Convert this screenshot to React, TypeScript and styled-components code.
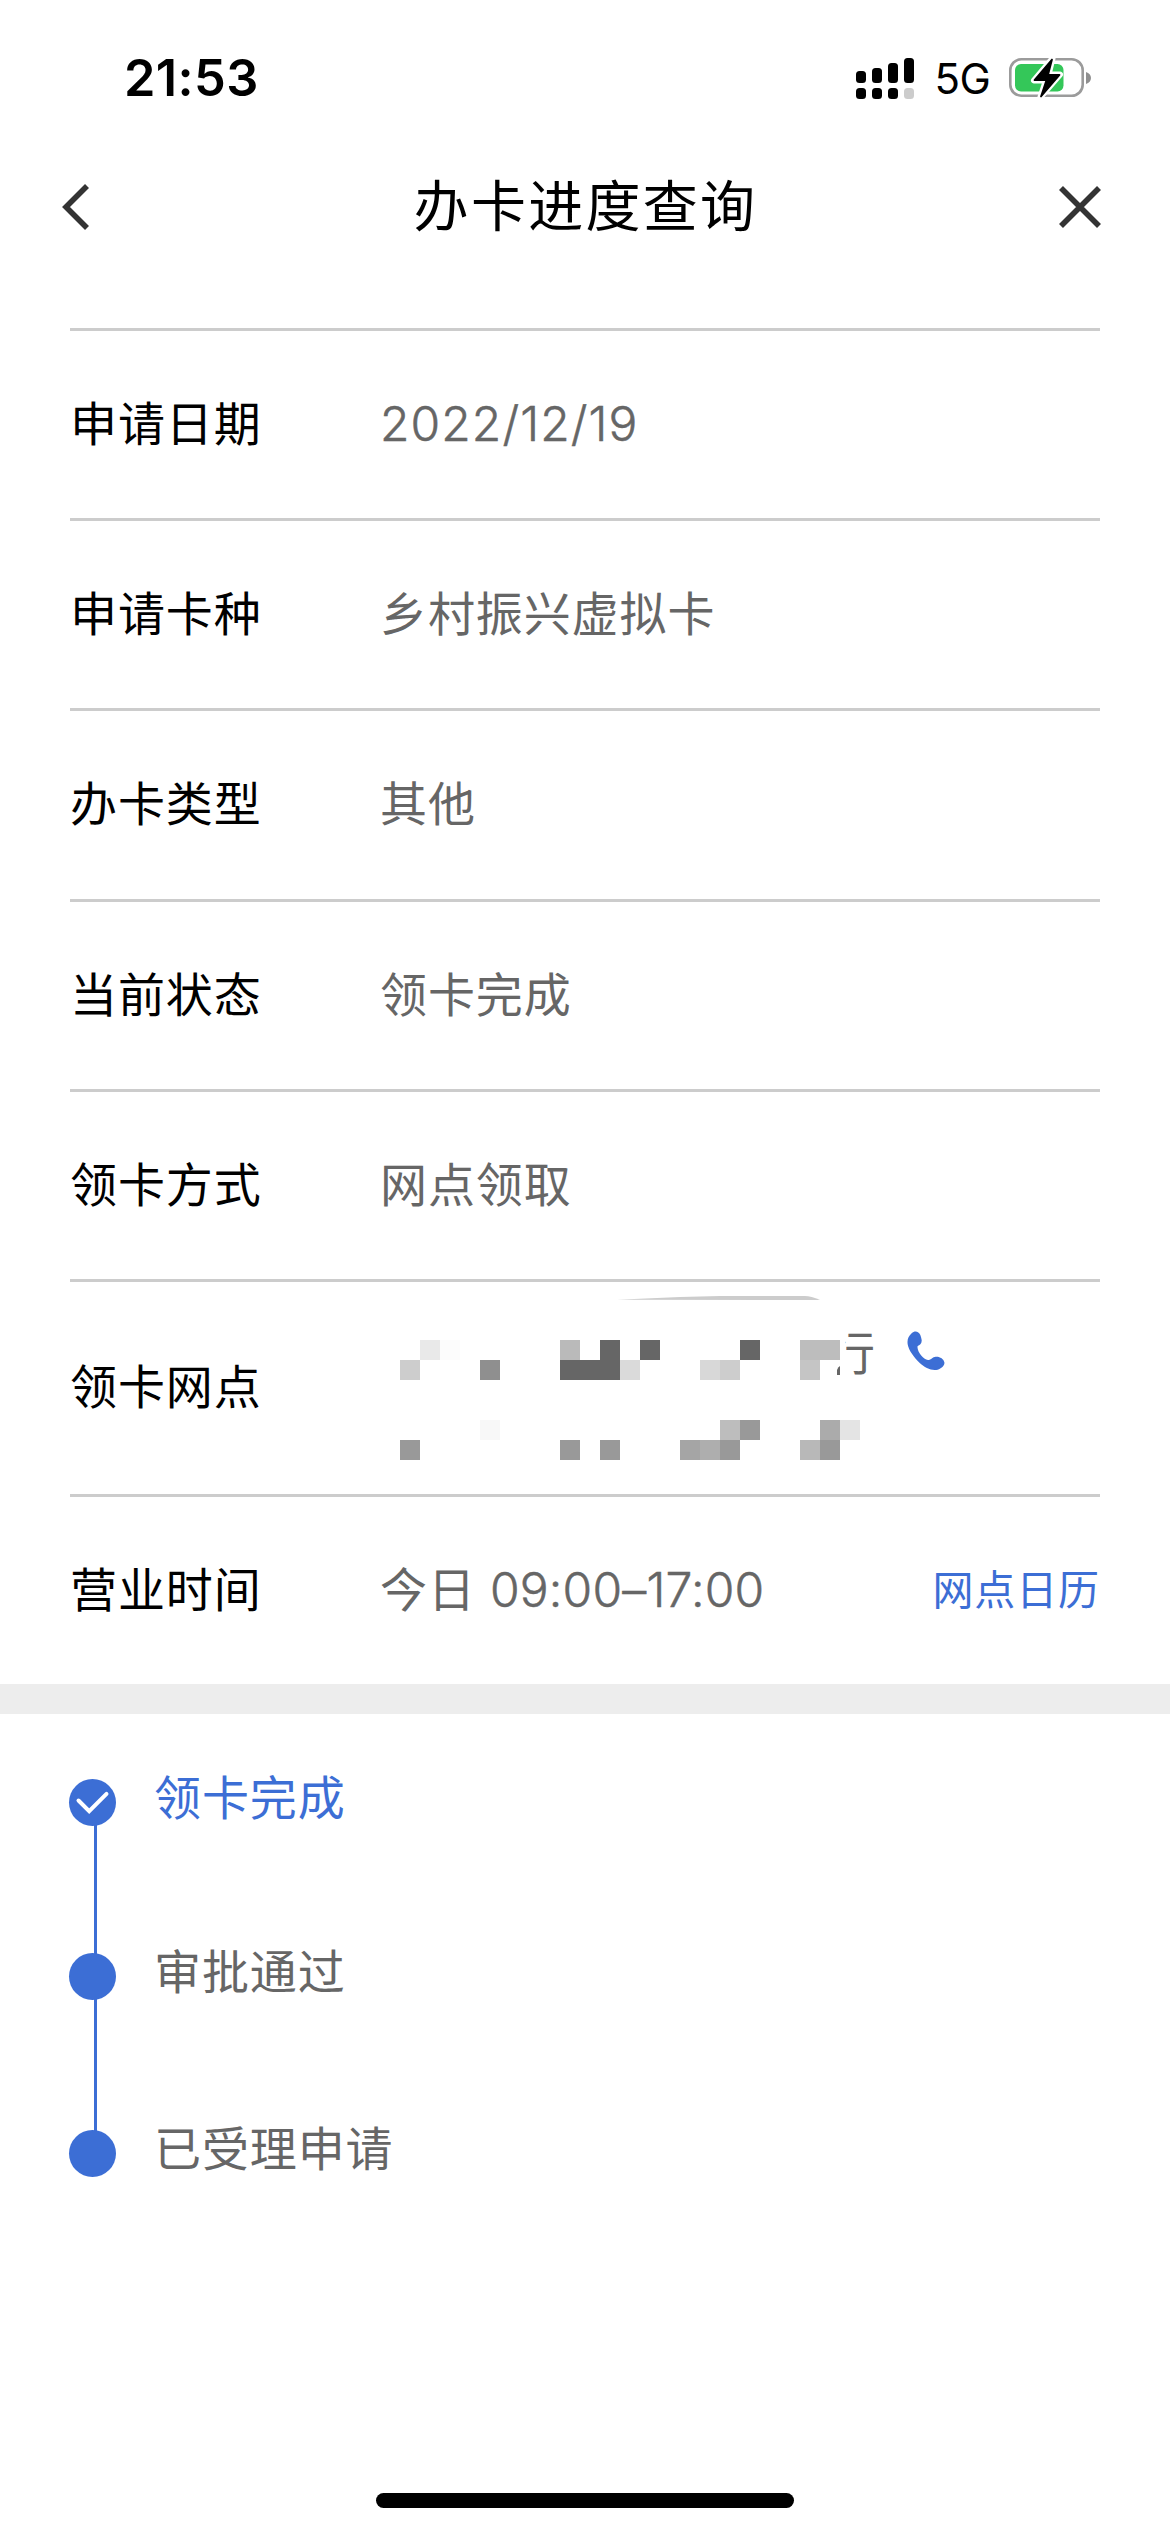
import React from 'react';
import styled, { createGlobalStyle } from 'styled-components';

const BLUE = '#3c6ed5';
const GREY = '#666666';

const GlobalStyle = createGlobalStyle`
  * { box-sizing: border-box; }
  body { margin: 0; background: #fff; }
  svg { display: block; flex: none; }
`;

const Screen = styled.main`
  width: 1170px;
  height: 2532px;
  display: flex;
  flex-direction: column;
  background: #fff;
  overflow: hidden;
  font-family: Inter, 'Noto Sans CJK SC', sans-serif;
  color: #000;
`;

const StatusBar = styled.header`
  height: 156px;
  display: flex;
  justify-content: space-between;
  padding: 48px 78px 0 124px;
`;

const Clock = styled.div`
  height: 60px;
  line-height: 60px;
  font-size: 50.5px;
  font-weight: 600;
  letter-spacing: 0.4px;
`;

const StatusIcons = styled.div`
  height: 60px;
  display: flex;
  align-items: center;
`;

const Network = styled.span`
  width: 53px;
  margin: 2px 20px 0 22px;
  font-size: 42px;
  line-height: 60px;
  letter-spacing: -0.5px;
  white-space: nowrap;
  display: flex;
  justify-content: center;
`;

const NavBar = styled.nav`
  height: 102px;
  flex: none;
  display: flex;
  align-items: center;
  justify-content: space-between;
  padding: 0 67px 0 60px;
`;

const NavButton = styled.button`
  width: 46px;
  height: 46px;
  padding: 0;
  border: 0;
  background: none;
`;

const Title = styled.h1`
  margin: 0 0 2px 8px;
  font-size: 55px;
  font-weight: 400;
  line-height: 80px;
  letter-spacing: 2.3px;
`;

const Details = styled.dl`
  margin: 70px 70px 0;
  flex: none;
`;

const Row = styled.div<{ $height?: number }>`
  height: ${(p) => p.$height ?? 190.2}px;
  border-top: 3px solid #cccccc;
  display: flex;
  align-items: center;
  padding-bottom: 1px;
  font-size: 47px;
  line-height: 70px;
  letter-spacing: 0.9px;
`;

const Label = styled.dt`
  width: 310px;
`;

const Value = styled.dd`
  margin: 0;
  flex: 1;
  color: ${GREY};
`;

const Digits = styled.span<{ $spacing: number }>`
  font-size: 48px;
  font-weight: 300;
  -webkit-text-stroke: 0.5px ${GREY};
  letter-spacing: ${(p) => p.$spacing}px;
`;

const CalendarLink = styled.a`
  color: ${BLUE};
  font-size: 41px;
  letter-spacing: 0.9px;
`;

const Branch = styled.dd`
  position: relative;
  margin: 0;
  flex: 1;
  align-self: stretch;
  display: flex;
  align-items: flex-start;
  gap: 31px;
  padding: 36px 0 0 448px;
  color: ${GREY};
`;

const Redaction = styled.svg`
  position: absolute;
  left: 0;
  top: 0;
`;

const PhoneIcon = styled.svg`
  margin-top: 13px;
`;

const Divider = styled.hr`
  width: 100%;
  height: 30px;
  flex: none;
  margin: 0;
  border: 0;
  background: #ededed;
`;

const Timeline = styled.ol`
  list-style: none;
  margin: 0;
  padding: 65px 69px 0;
  flex: 1;
`;

const Step = styled.li<{ $height: number }>`
  height: ${(p) => p.$height}px;
  display: flex;
  gap: 38px;
`;

const Rail = styled.div`
  width: 47px;
  display: flex;
  flex-direction: column;
  align-items: center;
`;

const Dot = styled.div`
  width: 47px;
  height: 47px;
  flex: none;
  border-radius: 50%;
  background: ${BLUE};
`;

const Connector = styled.div`
  width: 3px;
  flex: 1;
  margin: -2px 0 -2px 6px;
  background: ${BLUE};
`;

const StepText = styled.div<{ $active?: boolean }>`
  height: 70px;
  margin-top: -16px;
  font-size: 47px;
  line-height: 70px;
  letter-spacing: 0.9px;
  color: ${(p) => (p.$active ? BLUE : GREY)};
`;

const HomeArea = styled.footer`
  height: 39px;
  flex: none;
  display: flex;
  justify-content: center;
`;

const HomeIndicator = styled.div`
  width: 418px;
  height: 15px;
  border-radius: 8px;
  background: #000;
`;

const fields: [string, React.ReactNode][] = [
  ['申请日期', <Digits $spacing={1.1}>2022/12/19</Digits>],
  ['申请卡种', '乡村振兴虚拟卡'],
  ['办卡类型', '其他'],
  ['当前状态', '领卡完成'],
  ['领卡方式', '网点领取'],
];

const steps = [
  { text: '领卡完成', height: 174.3, done: true },
  { text: '审批通过', height: 176.7 },
  { text: '已受理申请', height: 60 },
];

// x, y, width, fill
const tiles: [number, number, number, string][] = [
  [20, 78, 20, '#cdcdcd'], [40, 58, 20, '#e9e9e9'], [60, 58, 20, '#fcfcfc'],
  [100, 78, 20, '#8f8f8f'], [180, 58, 20, '#bababa'], [180, 78, 60, '#666666'],
  [220, 58, 20, '#666666'], [240, 78, 20, '#dadada'], [260, 58, 20, '#666666'],
  [320, 78, 20, '#d8d8d8'], [340, 78, 20, '#cdcdcd'], [360, 58, 20, '#666666'],
  [420, 58, 40, '#bdbdbd'], [420, 78, 20, '#c5c5c5'],
  [20, 158, 20, '#999999'], [100, 138, 20, '#f8f8f8'], [180, 158, 20, '#999999'],
  [220, 158, 20, '#999999'], [300, 158, 20, '#a5a5a5'], [320, 158, 20, '#aeaeae'],
  [340, 138, 20, '#bdbdbd'], [340, 158, 20, '#999999'], [360, 138, 20, '#999999'],
  [420, 158, 20, '#b8b8b8'], [440, 138, 20, '#ababab'], [440, 158, 20, '#999999'],
  [460, 138, 20, '#e4e4e4'],
];

function Signal() {
  const tops = [13, 10, 5, 0];
  return (
    <svg width="58" height="41" viewBox="0 0 58 41">
      {tops.map((top, i) => (
        <g key={i}>
          <rect x={i * 16} y={top} width="10" height={25 - top} rx="3.5" />
          <rect x={i * 16} y="30" width="10" height="11" rx="3.5" fill={i === 3 ? '#cccccc' : '#000'} />
        </g>
      ))}
    </svg>
  );
}

function Battery() {
  return (
    <svg width="83" height="42" viewBox="0 0 83 42">
      <rect x="1.3" y="2.3" width="72.4" height="36.4" rx="11" fill="none" stroke="#9b9b9b" strokeWidth="2.6" />
      <path d="M77 15v12c3-1 5-3.300 5-6s-2-5-5-6z" fill="#8f8f8f" />
      <rect x="6" y="7" width="48.500" height="27.500" rx="6" fill="#34c759" />
      <path d="M43.500 1.500 25 23.500h12L31.500 40 51 17.500H39.500z" fill="#000" stroke="#fff" strokeWidth="6" strokeLinejoin="round" />
      <path d="M43 2.500 25.500 23h12L32 39.500 50.500 18H39z" fill="#000" stroke="#000" strokeWidth="1.800" strokeLinejoin="round" />
    </svg>
  );
}

function RedactedName() {
  return (
    <Redaction width="500" height="208" viewBox="0 0 500 208">
      <path d="M237 17.700 300 15 340 14H425q6 0 15 4z" fill="#cccccc" />
      <rect x="440" y="46" width="25.500" height="52" fill="#fff" />
      <path d="M457 93v-5q1-3 3-4v9z" fill={GREY} />
      {tiles.map(([x, y, w, fill]) => (
        <rect key={`${x}-${y}`} x={x} y={y} width={w} height="20" fill={fill} shapeRendering="crispEdges" />
      ))}
    </Redaction>
  );
}

export default function App() {
  return (
    <Screen>
      <GlobalStyle />
      <StatusBar>
        <Clock>21:53</Clock>
        <StatusIcons>
          <Signal />
          <Network>5G</Network>
          <Battery />
        </StatusIcons>
      </StatusBar>
      <NavBar>
        <NavButton aria-label="返回">
          <svg width="46" height="46" viewBox="0 0 46 46" fill="none" stroke="#333" strokeWidth="5.600">
            <path d="M27 2 6 23l21 21" />
          </svg>
        </NavButton>
        <Title>办卡进度查询</Title>
        <NavButton aria-label="关闭">
          <svg width="46" height="46" viewBox="0 0 46 46" fill="none" stroke="#333" strokeWidth="5.600">
            <path d="m4 4 38 38M42 4 4 42" />
          </svg>
        </NavButton>
      </NavBar>
      <Details>
        {fields.map(([label, value]) => (
          <Row key={label}>
            <Label>{label}</Label>
            <Value>{value}</Value>
          </Row>
        ))}
        <Row $height={215}>
          <Label>领卡网点</Label>
          <Branch>
            行
            <PhoneIcon width="38" height="40" viewBox="0 0 114 120">
              <path
                d="M14 7C23-2 35 1 40 12c2 5 3 10 4 15 1 10-6 15-12 18-4 13 16 41 31 42 10 0 11-7 20-9 13-3 27 5 29 16 2 8-8 19-20 22-17 5-39-6-53-19C21 80 5 58 2 40 0 26 4 16 14 7z"
                fill={BLUE}
              />
            </PhoneIcon>
            <RedactedName />
          </Branch>
        </Row>
        <Row $height={190}>
          <Label>营业时间</Label>
          <Value>
            今日 <Digits $spacing={0.2}>09:00–17:00</Digits>
          </Value>
          <CalendarLink>网点日历</CalendarLink>
        </Row>
      </Details>
      <Divider />
      <Timeline>
        {steps.map((step, i) => (
          <Step key={step.text} $height={step.height}>
            <Rail>
              <Dot>
                {step.done && (
                  <svg width="47" height="47" viewBox="0 0 47 47" fill="none" stroke="#fff" strokeWidth="4" strokeLinecap="round">
                    <path d="m9.500 21.500 10.700 10.700L37.500 14.800" />
                  </svg>
                )}
              </Dot>
              {i < steps.length - 1 && <Connector />}
            </Rail>
            <StepText $active={step.done}>{step.text}</StepText>
          </Step>
        ))}
      </Timeline>
      <HomeArea>
        <HomeIndicator />
      </HomeArea>
    </Screen>
  );
}
